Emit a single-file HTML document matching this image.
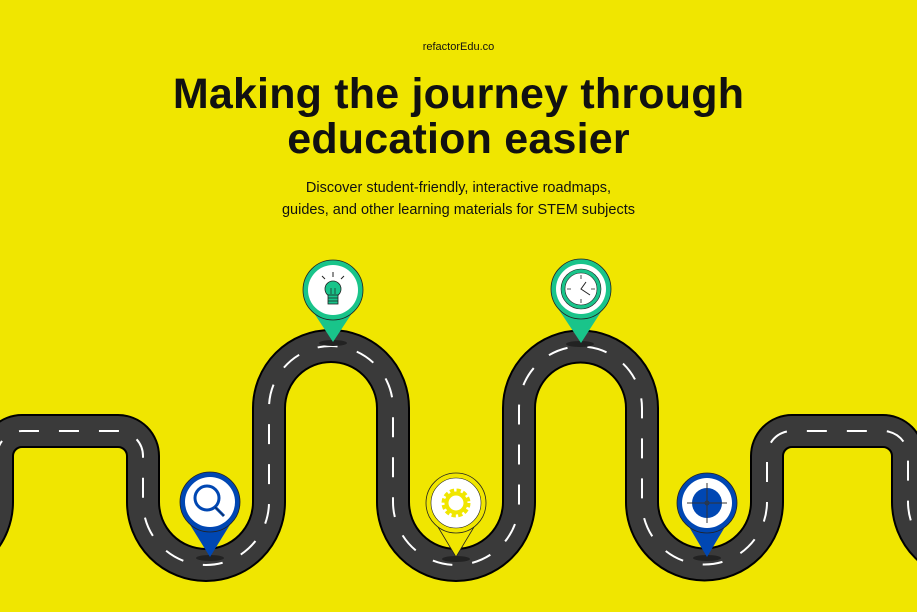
<!DOCTYPE html>
<html><head><meta charset="utf-8"><style>
html,body{margin:0;padding:0}
body{width:917px;height:612px;background:#f0e600;overflow:hidden;position:relative;font-family:"Liberation Sans",sans-serif;color:#111}
.brand{position:absolute;top:41px;left:0;width:917px;text-align:center;font-size:11px}
h1{position:absolute;top:72px;left:0;width:917px;margin:0;text-align:center;font-size:43px;line-height:45px;font-weight:bold;letter-spacing:0.2px}
.sub{position:absolute;top:177px;left:0;width:917px;text-align:center;font-size:14.5px;line-height:22px}
svg{position:absolute;left:0;top:0}
</style></head><body>
<div class="brand">refactorEdu.co</div>
<h1>Making the journey through<br>education easier</h1>
<div class="sub">Discover student-friendly, interactive roadmaps,<br>guides, and other learning materials for STEM subjects</div>
<svg width="917" height="612" viewBox="0 0 917 612">
<defs>
<path id="road" d="M -129 502 A 63 63 0 0 0 -3 502 V 456 A 25 25 0 0 1 22 431 H 118 A 25 25 0 0 1 143 456 V 502 A 63 63 0 0 0 269 502 V 408 A 62 62 0 0 1 393 408 V 502 A 63 63 0 0 0 519 502 V 408 A 61.5 61.5 0 0 1 642 408 V 502 A 62.5 62.5 0 0 0 767 502 V 456 A 25 25 0 0 1 792 431 H 883 A 25 25 0 0 1 908 456 V 502 A 63 63 0 0 0 1034 502"/>
</defs>
<use href="#road" fill="none" stroke="#000" stroke-width="34"/>
<use href="#road" fill="none" stroke="#3a3a3a" stroke-width="30"/>
<use href="#road" fill="none" stroke="#fff" stroke-width="2" stroke-dasharray="20 20"/>
<g fill="#222">
<ellipse cx="210" cy="558" rx="14" ry="3"/>
<ellipse cx="333" cy="343" rx="14" ry="3"/>
<ellipse cx="456" cy="559" rx="14" ry="3"/>
<ellipse cx="580" cy="344" rx="14" ry="3"/>
<ellipse cx="707" cy="558" rx="14" ry="3"/>
</g>
<g>
<path d="M184 515 L210 557 L236 515 Z" fill="#0047b3"/>
<circle cx="210" cy="502" r="30" fill="#0047b3" stroke="#222" stroke-width="0.8"/>
<circle cx="210" cy="502" r="25" fill="#fff"/>
<circle cx="207" cy="498" r="12" fill="none" stroke="#0047b3" stroke-width="3"/>
<line x1="215" y1="507" x2="224" y2="516" stroke="#0047b3" stroke-width="3"/>
<line x1="215" y1="507" x2="224" y2="516" stroke="#222" stroke-width="0.6"/>
</g>
<g>
<path d="M308 304 L333 342 L358 304 Z" fill="#19c48a"/>
<circle cx="333" cy="290" r="30" fill="#19c48a" stroke="#222" stroke-width="0.8"/>
<circle cx="333" cy="290" r="25" fill="#fff"/>
<circle cx="333" cy="289" r="8" fill="#19c48a" stroke="#222" stroke-width="0.8"/>
<rect x="328" y="295" width="10" height="9" fill="#19c48a" stroke="#222" stroke-width="0.8"/>
<path d="M328 298 H338 M328 301 H338 M331 294 V288 M335 294 V288" stroke="#222" stroke-width="0.7"/>
<path d="M333 272 V277 M322 276 L325 279 M344 276 L341 279" stroke="#222" stroke-width="1"/>
</g>
<g>
<path d="M432 517 L456 557 L480 517 Z" fill="#f0e600" stroke="#222" stroke-width="0.8"/>
<circle cx="456" cy="503" r="30" fill="#f0e600" stroke="#222" stroke-width="0.8"/>
<circle cx="456" cy="503" r="25" fill="#fff" stroke="#222" stroke-width="0.6"/>
<circle cx="456" cy="503" r="12" fill="none" stroke="#f0e600" stroke-width="5" stroke-dasharray="4 2.3"/>
<circle cx="456" cy="503" r="9.5" fill="none" stroke="#f0e600" stroke-width="4"/>
<circle cx="456" cy="503" r="6" fill="#fff"/>
</g>
<g>
<path d="M555 304 L581 343 L606 304 Z" fill="#19c48a"/>
<circle cx="581" cy="289" r="30" fill="#19c48a" stroke="#222" stroke-width="0.8"/>
<circle cx="581" cy="289" r="25" fill="#fff"/>
<circle cx="581" cy="289" r="20" fill="#19c48a" stroke="#222" stroke-width="0.6"/>
<circle cx="581" cy="289" r="16" fill="#fff" stroke="#222" stroke-width="0.6"/>
<path d="M581 275 V279 M581 299 V303 M567 289 H571 M591 289 H595" stroke="#222" stroke-width="0.8"/>
<path d="M586 282 L581 289 L590 295" fill="none" stroke="#222" stroke-width="1"/>
</g>
<g>
<path d="M682 515 L707 557 L732 515 Z" fill="#0047b3"/>
<circle cx="707" cy="503" r="30" fill="#0047b3" stroke="#222" stroke-width="0.8"/>
<circle cx="707" cy="503" r="25" fill="#fff"/>
<circle cx="707" cy="503" r="15" fill="#0047b3"/>
<path d="M707 483 V523 M687 503 H727" stroke="#333" stroke-width="1"/>
<circle cx="707" cy="503" r="2" fill="none" stroke="#333" stroke-width="0.8"/>
</g>
</svg>
</body></html>
